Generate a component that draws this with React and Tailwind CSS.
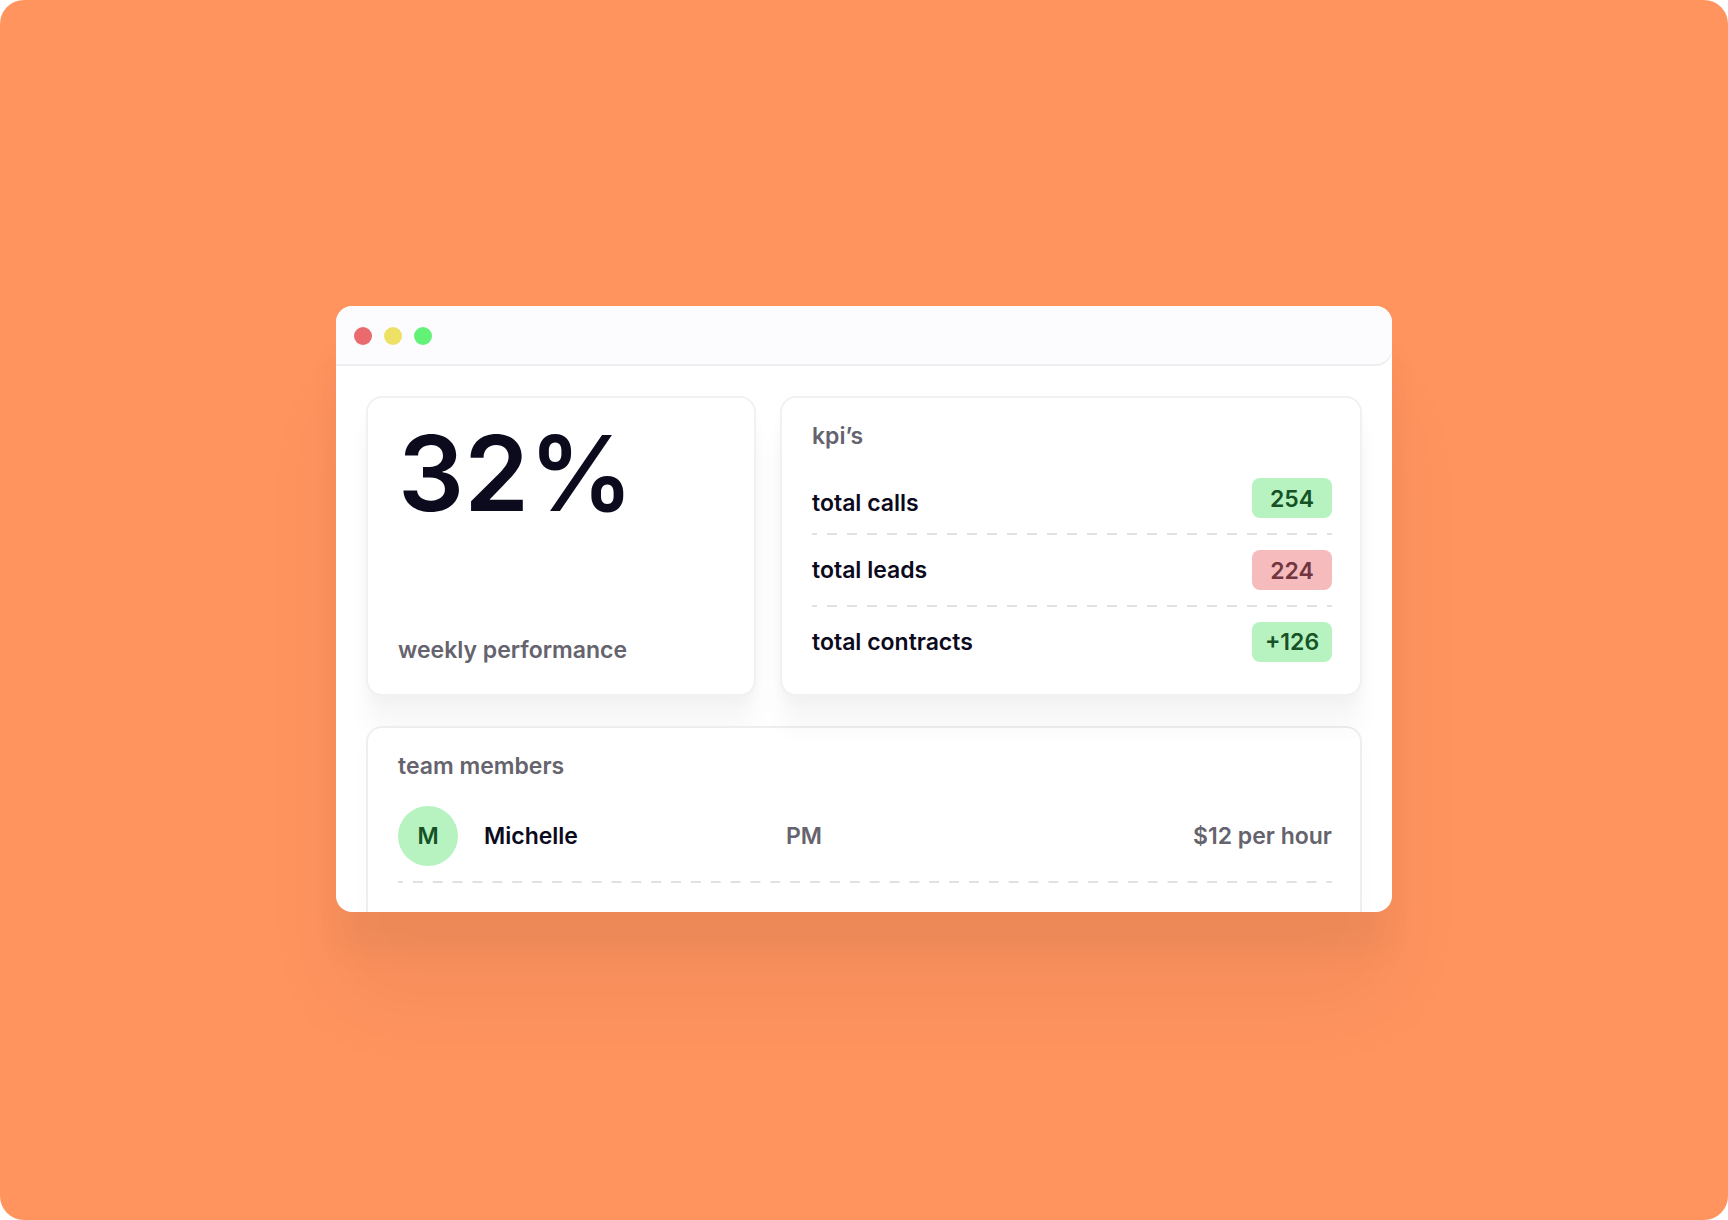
const kpis = [
  { label: "total calls", value: "254", align: "items-end", badge: "pt-0.5 leading-[38px] bg-[#b6f3c0] text-[#175227]" },
  { label: "total leads", value: "224", align: "items-center", badge: "pt-0.5 leading-[38px] bg-[#f6bbbd] text-[#713640]" },
  { label: "total contracts", value: "+126", align: "items-center", badge: "leading-10 bg-[#b6f3c0] text-[#175227]" },
];

const members = [{ initial: "M", name: "Michelle", role: "PM", rate: "$12 per hour" }];

function Divider() {
  return (
    <div
      aria-hidden="true"
      className="h-0.5 bg-[linear-gradient(90deg,#e1e1e3_25%,transparent_25%_75%,#e1e1e3_75%)] bg-[length:20px_2px] bg-repeat-round"
    />
  );
}

function TitleBar() {
  return (
    <header className="flex h-[60px] items-center gap-3 rounded-t-2xl rounded-br-2xl bg-[#fcfcfe] px-[18px] shadow-[inset_0_-2px_0_#eeeef0]">
      <span className="size-[18px] rounded-full bg-[#e96b6e]" />
      <span className="size-[18px] rounded-full bg-[#ece164]" />
      <span className="size-[18px] rounded-full bg-[#62f278]" />
    </header>
  );
}

function PerformanceCard() {
  return (
    <section className="flex flex-col justify-between rounded-2xl border-2 border-[#f1f1f2] bg-white pt-[21px] pr-7 pb-[29px] pl-[30px] shadow-[0_32px_24px_rgba(12,10,40,0.035),0_8px_12px_rgba(12,10,40,0.025)]">
      <p className="text-[104px] leading-[108px] font-semibold text-[#0c0a1d]">32%</p>
      <h2 className="leading-[30px] text-[#65636d]">weekly performance</h2>
    </section>
  );
}

function KpiCard() {
  return (
    <section className="relative z-10 rounded-2xl border-2 border-[#f1f1f2] bg-white pt-[23px] pr-7 pb-8 pl-[30px] shadow-[0_32px_24px_rgba(12,10,40,0.035),0_8px_12px_rgba(12,10,40,0.025)]">
      <h2 className="leading-[30px] text-[#65636d]">kpi’s</h2>
      <dl className="mt-[27px] flex flex-col gap-[15px]">
        {kpis.map((kpi, i) => (
          <div key={kpi.label} className="flex flex-col gap-[15px]">
            <div className={`flex justify-between ${kpi.align}`}>
              <dt className="leading-[30px] text-[#0c0a1d]">{kpi.label}</dt>
              <dd className={`w-20 rounded-lg text-center ${kpi.badge}`}>{kpi.value}</dd>
            </div>
            {i < kpis.length - 1 && <Divider />}
          </div>
        ))}
      </dl>
    </section>
  );
}

function TeamCard() {
  return (
    <section className="relative rounded-t-2xl border-2 border-b-0 border-[#eeeef0] bg-white pt-[23px] pr-7 pb-[29px] pl-[30px] shadow-[0_8px_24px_rgba(12,10,40,0.02)]">
      <h2 className="leading-[30px] text-[#65636d]">team members</h2>
      <ul className="mt-[25px]">
        {members.map((member) => (
          <li key={member.name} className="flex flex-col gap-[15px]">
            <div className="grid grid-cols-[388fr_546fr] items-center">
              <div className="flex items-center gap-[26px]">
                <span className="flex size-[60px] items-center justify-center rounded-full bg-[#b6f3c0] font-semibold text-[#175227]">
                  {member.initial}
                </span>
                <span className="text-[#0c0a1d]">{member.name}</span>
              </div>
              <div className="flex items-center justify-between text-[#65636d]">
                <span>{member.role}</span>
                <span>{member.rate}</span>
              </div>
            </div>
            <Divider />
          </li>
        ))}
      </ul>
    </section>
  );
}

function App() {
  return (
    <main className="flex min-h-screen items-center justify-center rounded-3xl bg-[#ff945f] pb-0.5 font-[Inter,sans-serif] text-[23px] font-[560]">
      <div className="w-full max-w-[1056px] rounded-2xl bg-white shadow-[0_40px_32px_rgba(12,20,10,0.04),0_90px_90px_rgba(12,20,10,0.045)]">
        <div className="overflow-hidden rounded-2xl">
          <TitleBar />
          <div className="px-[30px] pt-[30px]">
            <div className="grid grid-cols-[390fr_582fr] gap-6 pb-[30px]">
              <PerformanceCard />
              <KpiCard />
            </div>
            <TeamCard />
          </div>
        </div>
      </div>
    </main>
  );
}

export default App;
